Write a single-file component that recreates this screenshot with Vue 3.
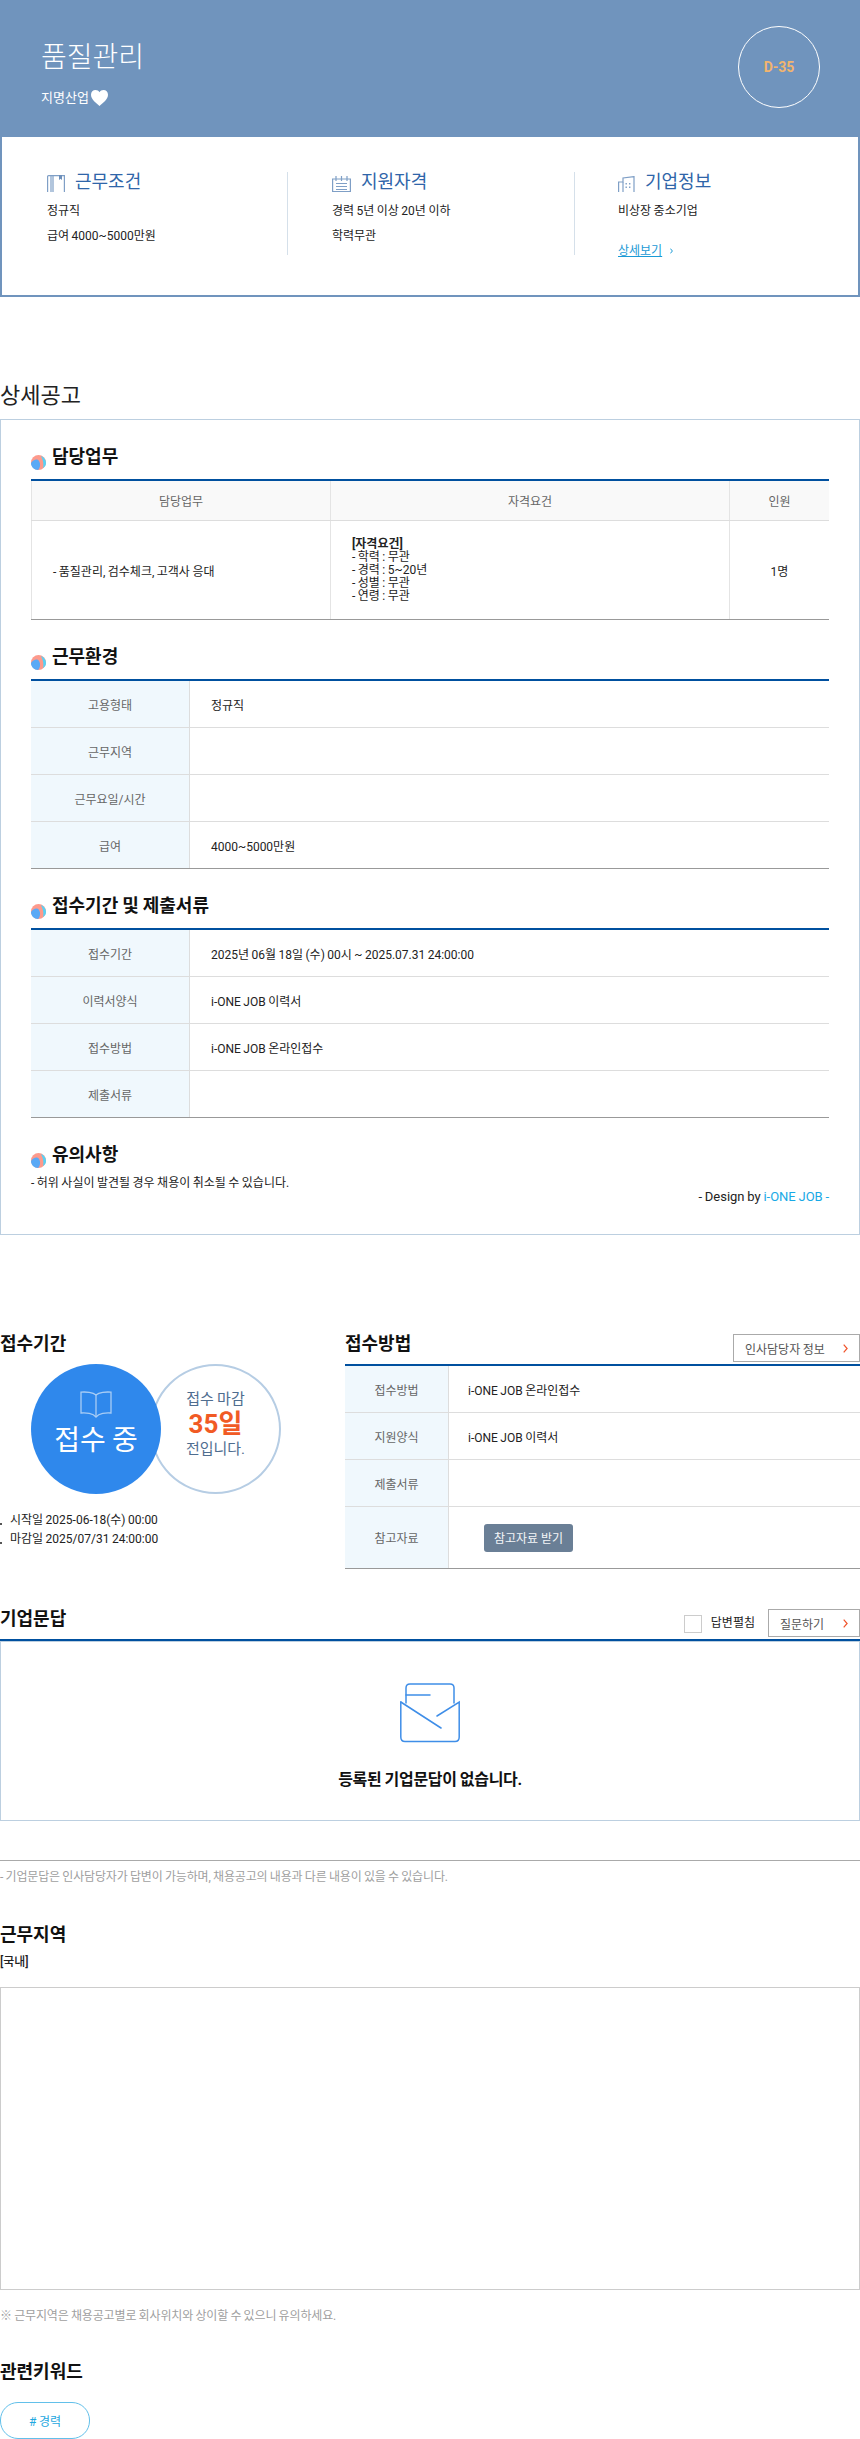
<template>
  <div class="page">
    <!-- 상단 타이틀 -->
    <header class="top">
      <div>
        <h1 class="job-title">품질관리</h1>
        <div class="company">
          <span>지명산업</span>
          <svg class="heart" viewBox="0 0 17 16" width="17" height="16">
            <path d="M8.5 16 C5 12.6 0 9.6 0 4.8 C0 2 2 0 4.5 0 C6.2 0 7.7 .9 8.5 2.3 C9.3 .9 10.8 0 12.5 0 C15 0 17 2 17 4.8 C17 9.6 12 12.6 8.5 16 Z" fill="#fff" />
          </svg>
        </div>
      </div>
      <div class="dday">D-35</div>
    </header>

    <div class="summary">
      <div class="sum-col">
        <h4 class="sum-head">
          <svg class="sum-icon" viewBox="0 0 18 17" width="18" height="17" fill="none" stroke="#7f9fc6" stroke-width="1.2">
            <path d="M.6 17V1.6Q.6.6 1.6.6H17.4V17" />
            <path d="M6 .6V17M4 1V17" />
            <path d="M12 0h3v5l-1.5-1.2L12 5z" fill="#6d8fba" stroke="none" />
          </svg>
          근무조건
        </h4>
        <p>정규직</p>
        <p>급여 4000~5000만원</p>
      </div>
      <div class="sum-col">
        <h4 class="sum-head">
          <svg class="sum-icon" viewBox="0 0 19 16" width="19" height="16" fill="none" stroke="#7f9fc6" stroke-width="1.2">
            <path d="M.6 16V3H18.4V16" />
            <path d="M4 0V5M9.5 0V5M15 0V5" />
            <path d="M4 7.5H15M4 10.5H15M4 13.5H15M.6 15.5H18.4" />
          </svg>
          지원자격
        </h4>
        <p>경력 5년 이상 20년 이하</p>
        <p>학력무관</p>
      </div>
      <div class="sum-col">
        <h4 class="sum-head">
          <svg class="sum-icon" viewBox="0 0 17 16" width="17" height="16" fill="none" stroke="#7f9fc6" stroke-width="1.2">
            <path d="M.6 16V6H5V2L16 .6V16" />
            <path d="M5 6V16" />
            <path d="M7.5 7h1.4v1.4H7.5zM11 7h1.4v1.4H11zM7.5 10.5h1.4v1.4H7.5zM11 10.5h1.4v1.4H11z" fill="#7f9fc6" stroke="none" />
          </svg>
          기업정보
        </h4>
        <p>비상장 중소기업</p>
        <a class="more">
          <span>상세보기</span>
          <svg viewBox="0 0 3 6" width="3" height="6" fill="none" stroke="#1a9ad6" stroke-width="1"><path d="M.4 .6l2 2.4-2 2.4" /></svg>
        </a>
      </div>
    </div>

    <!-- 상세공고 -->
    <h2 class="detail-title">상세공고</h2>
    <section class="detail">
      <div class="sec-head">
        <svg class="dot" viewBox="0 0 15 15" width="15" height="15">
          <circle cx="7.5" cy="7.5" r="7.5" fill="#fd9a8c" />
          <path d="M0 8 C2 5 6 3 8 6 C10 9 9 13 7 15 C3 15 0 12 0 8Z" fill="#59a9f6" />
          <path d="M10 1 C13 2 15 5 15 8 C15 10 14 12 12 13 C13 9 12 5 10 1Z" fill="#56d2f6" />
        </svg>
        <h3>담당업무</h3>
      </div>
      <div class="duty">
        <div class="duty-row duty-hd">
          <div>담당업무</div>
          <div>자격요건</div>
          <div>인원</div>
        </div>
        <div class="duty-row duty-bd">
          <div class="duty-text">- 품질관리, 검수체크, 고객사 응대</div>
          <div class="duty-req">
            <b>[자격요건]</b>
            <span v-for="r in reqs" :key="r">{{ r }}</span>
          </div>
          <div>1명</div>
        </div>
      </div>

      <template v-for="group in groups" :key="group.title">
        <div class="sec-head sec-next">
          <svg class="dot" viewBox="0 0 15 15" width="15" height="15">
            <circle cx="7.5" cy="7.5" r="7.5" fill="#fd9a8c" />
            <path d="M0 8 C2 5 6 3 8 6 C10 9 9 13 7 15 C3 15 0 12 0 8Z" fill="#59a9f6" />
            <path d="M10 1 C13 2 15 5 15 8 C15 10 14 12 12 13 C13 9 12 5 10 1Z" fill="#56d2f6" />
          </svg>
          <h3>{{ group.title }}</h3>
        </div>
        <div class="info">
          <div v-for="row in group.rows" :key="row[0]" class="info-row">
            <div class="info-th">{{ row[0] }}</div>
            <div class="info-td">{{ row[1] }}</div>
          </div>
        </div>
      </template>

      <div class="sec-head sec-next sec-short">
        <svg class="dot" viewBox="0 0 15 15" width="15" height="15">
          <circle cx="7.5" cy="7.5" r="7.5" fill="#fd9a8c" />
          <path d="M0 8 C2 5 6 3 8 6 C10 9 9 13 7 15 C3 15 0 12 0 8Z" fill="#59a9f6" />
          <path d="M10 1 C13 2 15 5 15 8 C15 10 14 12 12 13 C13 9 12 5 10 1Z" fill="#56d2f6" />
        </svg>
        <h3>유의사항</h3>
      </div>
      <p class="warn">- 허위 사실이 발견될 경우 채용이 취소될 수 있습니다.</p>
      <p class="design">- Design by <span>i-ONE JOB -</span></p>
    </section>

    <!-- 접수기간 / 접수방법 -->
    <div class="apply">
      <div class="apply-left">
        <h3 class="big-head">접수기간</h3>
        <div class="circles">
          <div class="c-blue">
            <svg viewBox="0 0 32 27" width="32" height="27" fill="none" stroke="#a9cdf5" stroke-width="1.3">
              <path d="M16 4C13 1.5 6 .6 1 1.2V22C6 21.4 13 22.4 16 26C19 22.4 26 21.4 31 22V1.2C26 .6 19 1.5 16 4Z" />
              <path d="M16 4V26" />
            </svg>
            <strong>접수 중</strong>
          </div>
          <div class="c-white">
            <span>접수 마감</span>
            <b>35일</b>
            <span>전입니다.</span>
          </div>
        </div>
        <ul class="dates">
          <li>시작일 2025-06-18(수) 00:00</li>
          <li>마감일 2025/07/31 24:00:00</li>
        </ul>
      </div>
      <div class="apply-right">
        <div class="head-row">
          <h3 class="big-head">접수방법</h3>
          <a class="line-btn hr-btn">
            <span>인사담당자 정보</span>
            <svg viewBox="0 0 5 9" width="5" height="9" fill="none" stroke="#f0532a" stroke-width="1.2"><path d="M.7 .7l3.4 3.8-3.4 3.8" /></svg>
          </a>
        </div>
        <div class="info">
          <div v-for="row in methods" :key="row[0]" class="info-row method">
            <div class="info-th">{{ row[0] }}</div>
            <div class="info-td">{{ row[1] }}</div>
          </div>
          <div class="info-row method ref-row">
            <div class="info-th">참고자료</div>
            <div class="info-td"><button class="ref-btn">참고자료 받기</button></div>
          </div>
        </div>
      </div>
    </div>

    <!-- 기업문답 -->
    <div class="head-row qna-head">
      <h3 class="big-head">기업문답</h3>
      <div class="qna-tools">
        <span class="check"></span>
        <span class="check-label">답변펼침</span>
        <a class="line-btn qa-btn">
          <span>질문하기</span>
          <svg viewBox="0 0 5 9" width="5" height="9" fill="none" stroke="#f0532a" stroke-width="1.2"><path d="M.7 .7l3.4 3.8-3.4 3.8" /></svg>
        </a>
      </div>
    </div>
    <div class="qna-box">
      <svg viewBox="0 0 60 60" width="60" height="60" fill="none" stroke="#3f8ee8" stroke-width="1.5" stroke-linecap="round">
        <path d="M6 20V5Q6 1 10 1H50Q54 1 54 5V20" />
        <path d="M6 12H30" />
        <path d="M.8 19V54Q.8 58.5 5 58.5H55Q59.2 58.5 59.2 54V19L37 33" />
        <path d="M.8 19L41 45" />
      </svg>
      <p>등록된 기업문답이 없습니다.</p>
    </div>
    <hr class="rule" />
    <p class="note note-qna">- 기업문답은 인사담당자가 답변이 가능하며, 채용공고의 내용과 다른 내용이 있을 수 있습니다.</p>

    <!-- 근무지역 -->
    <h3 class="big-head area-head">근무지역</h3>
    <p class="area">[국내]</p>
    <div class="map"></div>
    <p class="note note-map">※ 근무지역은 채용공고별로 회사위치와 상이할 수 있으니 유의하세요.</p>

    <!-- 관련키워드 -->
    <h3 class="big-head key-head">관련키워드</h3>
    <span class="keyword"># 경력</span>
  </div>
</template>

<script setup>
const reqs = ['- 학력 : 무관', '- 경력 : 5~20년', '- 성별 : 무관', '- 연령 : 무관']

const groups = [
  {
    title: '근무환경',
    rows: [
      ['고용형태', '정규직'],
      ['근무지역', ''],
      ['근무요일/시간', ''],
      ['급여', '4000~5000만원']
    ]
  },
  {
    title: '접수기간 및 제출서류',
    rows: [
      ['접수기간', '2025년 06월 18일 (수) 00시 ~ 2025.07.31 24:00:00'],
      ['이력서양식', 'i-ONE JOB 이력서'],
      ['접수방법', 'i-ONE JOB 온라인접수'],
      ['제출서류', '']
    ]
  }
]

const methods = [
  ['접수방법', 'i-ONE JOB 온라인접수'],
  ['지원양식', 'i-ONE JOB 이력서'],
  ['제출서류', '']
]
</script>

<style>
body {
  margin: 0;
  background: #fff;
}
</style>

<style scoped>
.page {
  width: 860px;
  height: 2439px;
  overflow: hidden;
  font-family: Roboto, "Noto Sans CJK KR", sans-serif;
  font-size: 12px;
  word-spacing: -0.5px;
  color: #222;
}
h1, h2, h3, h4, p, ul {
  margin: 0;
  padding: 0;
}

/* 상단 */
.top {
  height: 137px;
  background: #7094bd;
  display: flex;
  justify-content: space-between;
  padding: 26px 40px 0 41px;
  box-sizing: border-box;
  color: #fff;
}
.job-title {
  font-size: 28px;
  font-weight: 300;
  line-height: 40px;
  margin-top: 12px;
}
.company {
  display: flex;
  align-items: center;
  gap: 2px;
  margin-top: 12px;
  font-size: 13px;
  font-weight: 400;
  line-height: 16px;
}
.dday {
  width: 82px;
  height: 82px;
  box-sizing: border-box;
  border: 1px solid #fff;
  border-radius: 50%;
  display: flex;
  align-items: center;
  justify-content: center;
  color: #f2b46e;
  font-size: 14px;
  font-weight: 700;
}
.summary {
  height: 160px;
  box-sizing: border-box;
  border: 2px solid #7094bd;
  border-top: 0;
  padding-top: 35px;
  display: grid;
  grid-template-columns: 286px 287px 1fr;
  align-items: start;
}
.sum-col {
  height: 83px;
  padding-left: 44px;
  border-right: 1px solid #d5e0ea;
}
.sum-col:first-child {
  padding-left: 45px;
}
.sum-col:last-child {
  padding-left: 43px;
  border-right: 0;
}
.sum-head {
  display: flex;
  align-items: flex-end;
  height: 20px;
  gap: 10px;
  font-size: 18px;
  font-weight: 400;
  line-height: 20px;
  color: #2f65a9;
  margin-bottom: 7px;
}
.sum-icon {
  flex: none;
}
.sum-col p {
  line-height: 25px;
}
.more {
  display: flex;
  align-items: center;
  gap: 8px;
  margin-top: 18px;
  line-height: 18px;
  color: #1a9ad6;
}
.more span {
  text-decoration: underline;
}

/* 상세공고 */
.detail-title {
  margin-top: 82px;
  font-size: 22px;
  font-weight: 400;
  line-height: 34px;
  color: #222;
}
.detail {
  margin-top: 6px;
  height: 816px;
  box-sizing: border-box;
  border: 1px solid #bccfe0;
  padding: 19px 30px 0;
}
.sec-head {
  display: flex;
  gap: 6px;
  height: 40px;
}
.sec-next {
  margin-top: 19px;
}
.sec-short {
  height: 36px;
}
.sec-head h3 {
  font-size: 18px;
  font-weight: 700;
  line-height: 36px;
  color: #111;
}
.dot {
  flex: none;
  margin-top: 16px;
}
.duty {
  border-top: 2px solid #00509f;
  width: 798px;
}
.duty-row {
  display: grid;
  grid-template-columns: 299px 399px 100px;
  box-sizing: border-box;
}
.duty-row > div {
  display: flex;
  align-items: center;
  justify-content: center;
  border-left: 1px solid #e4e4e4;
}
.duty-hd {
  height: 40px;
  background: #f9f9f9;
  border-bottom: 1px solid #ddd;
  color: #666;
}
.duty-bd {
  height: 99px;
  border-bottom: 1px solid #999;
}
.duty-row > .duty-text {
  justify-content: flex-start;
  padding-left: 21px;
}
.duty-row > .duty-req {
  flex-direction: column;
  align-items: flex-start;
  padding-left: 21px;
  line-height: 13px;
}
.duty-req b {
  font-weight: 700;
  color: #222;
}
.info {
  border-top: 2px solid #00509f;
}
.info-row {
  display: flex;
  height: 47px;
  box-sizing: border-box;
  border-bottom: 1px solid #ddd;
}
.info-row:last-child {
  border-bottom-color: #999;
}
.info-th {
  width: 159px;
  flex: none;
  box-sizing: border-box;
  background: #f0f8fd;
  border-right: 1px solid #ddd;
  color: #666;
  display: flex;
  align-items: center;
  justify-content: center;
}
.info-td {
  flex: 1;
  display: flex;
  align-items: center;
  padding-left: 21px;
}
.warn {
  margin-top: 3px;
  line-height: 14px;
}
.design {
  font-size: 13px;
  line-height: 14px;
  text-align: right;
}
.design span {
  color: #18a9e6;
}

/* 접수 */
.apply {
  display: flex;
  margin-top: 91px;
}
.apply-left {
  width: 345px;
  flex: none;
}
.apply-right {
  flex: 1;
}
.big-head {
  font-size: 18px;
  font-weight: 700;
  line-height: 36px;
  color: #111;
}
.head-row {
  display: flex;
  justify-content: space-between;
  height: 38px;
}
.apply-left .big-head {
  height: 38px;
}
.circles {
  display: flex;
  padding-left: 31px;
}
.c-blue,
.c-white {
  width: 130px;
  height: 130px;
  box-sizing: border-box;
  border-radius: 50%;
  display: flex;
  flex-direction: column;
  align-items: center;
}
.c-blue {
  position: relative;
  z-index: 1;
  background: #2f88ec;
  padding-top: 27px;
  color: #fff;
}
.c-blue strong {
  font-size: 28px;
  font-weight: 400;
  line-height: 36px;
  margin-top: 5px;
}
.c-white {
  width: 131px;
  margin-left: -11px;
  border: 2px solid #b6cde4;
  padding-top: 22px;
  font-size: 15px;
  line-height: 22px;
  color: #4f6d8f;
}
.c-white b {
  font-size: 26px;
  font-weight: 700;
  line-height: 28px;
  color: #f15a24;
}
.dates {
  list-style: none;
  margin-top: 17px;
  line-height: 18.5px;
}
.dates li {
  position: relative;
  padding-left: 10px;
}
.dates li::before {
  content: "";
  position: absolute;
  left: 0;
  top: 12px;
  width: 2px;
  height: 2px;
  background: #555;
}
.line-btn {
  height: 28px;
  box-sizing: border-box;
  border: 1px solid #aaa;
  display: flex;
  align-items: center;
  justify-content: space-between;
  padding: 0 11px 0 11px;
  color: #555;
  background: #fff;
}
.hr-btn {
  width: 127px;
  margin-top: 8px;
}
.method {
  height: 47px;
}
.method .info-th {
  width: 104px;
}
.method .info-td {
  padding-left: 19px;
}
.ref-row {
  height: 62px;
}
.ref-btn {
  width: 89px;
  height: 28px;
  margin-left: 16px;
  padding: 0;
  border: 0;
  border-radius: 3px;
  background: #6a7f96;
  color: #f4f6f8;
  font: inherit;
}

/* 기업문답 */
.qna-head {
  margin-top: 32px;
  box-sizing: border-box;
  border-bottom: 2px solid #00509f;
  height: 40px;
}
.qna-tools {
  display: flex;
  align-items: flex-start;
  padding-top: 8px;
}
.check {
  width: 18px;
  height: 18px;
  box-sizing: border-box;
  margin-top: 6px;
  border: 1px solid #ccc;
}
.check-label {
  margin: 5px 0 0 9px;
  line-height: 18px;
}
.qa-btn {
  width: 92px;
  margin-left: 13px;
}
.qna-box {
  height: 180px;
  box-sizing: border-box;
  border: 1px solid #bccfe0;
  padding-top: 41px;
  display: flex;
  flex-direction: column;
  align-items: center;
}
.qna-box p {
  margin-top: 27px;
  font-size: 16px;
  font-weight: 700;
  letter-spacing: -0.3px;
  line-height: 20px;
  color: #111;
}
.rule {
  margin: 39px 0 0;
  border: 0;
  border-top: 1px solid #aaa;
}
.note {
  letter-spacing: -0.15px;
  line-height: 18px;
  color: #a0a0a0;
}
.note-qna {
  margin-top: 7px;
}
.area-head {
  margin-top: 31px;
}
.area {
  line-height: 18px;
  font-weight: 500;
}
.map {
  margin-top: 16px;
  height: 303px;
  box-sizing: border-box;
  border: 1px solid #ccc;
}
.note-map {
  margin-top: 17px;
}
.key-head {
  margin-top: 29px;
}
.keyword {
  display: flex;
  align-items: center;
  justify-content: center;
  margin-top: 12px;
  width: 90px;
  height: 37px;
  box-sizing: border-box;
  border: 1px solid #62c0ea;
  border-radius: 18px;
  color: #1fa8e0;
}
</style>
